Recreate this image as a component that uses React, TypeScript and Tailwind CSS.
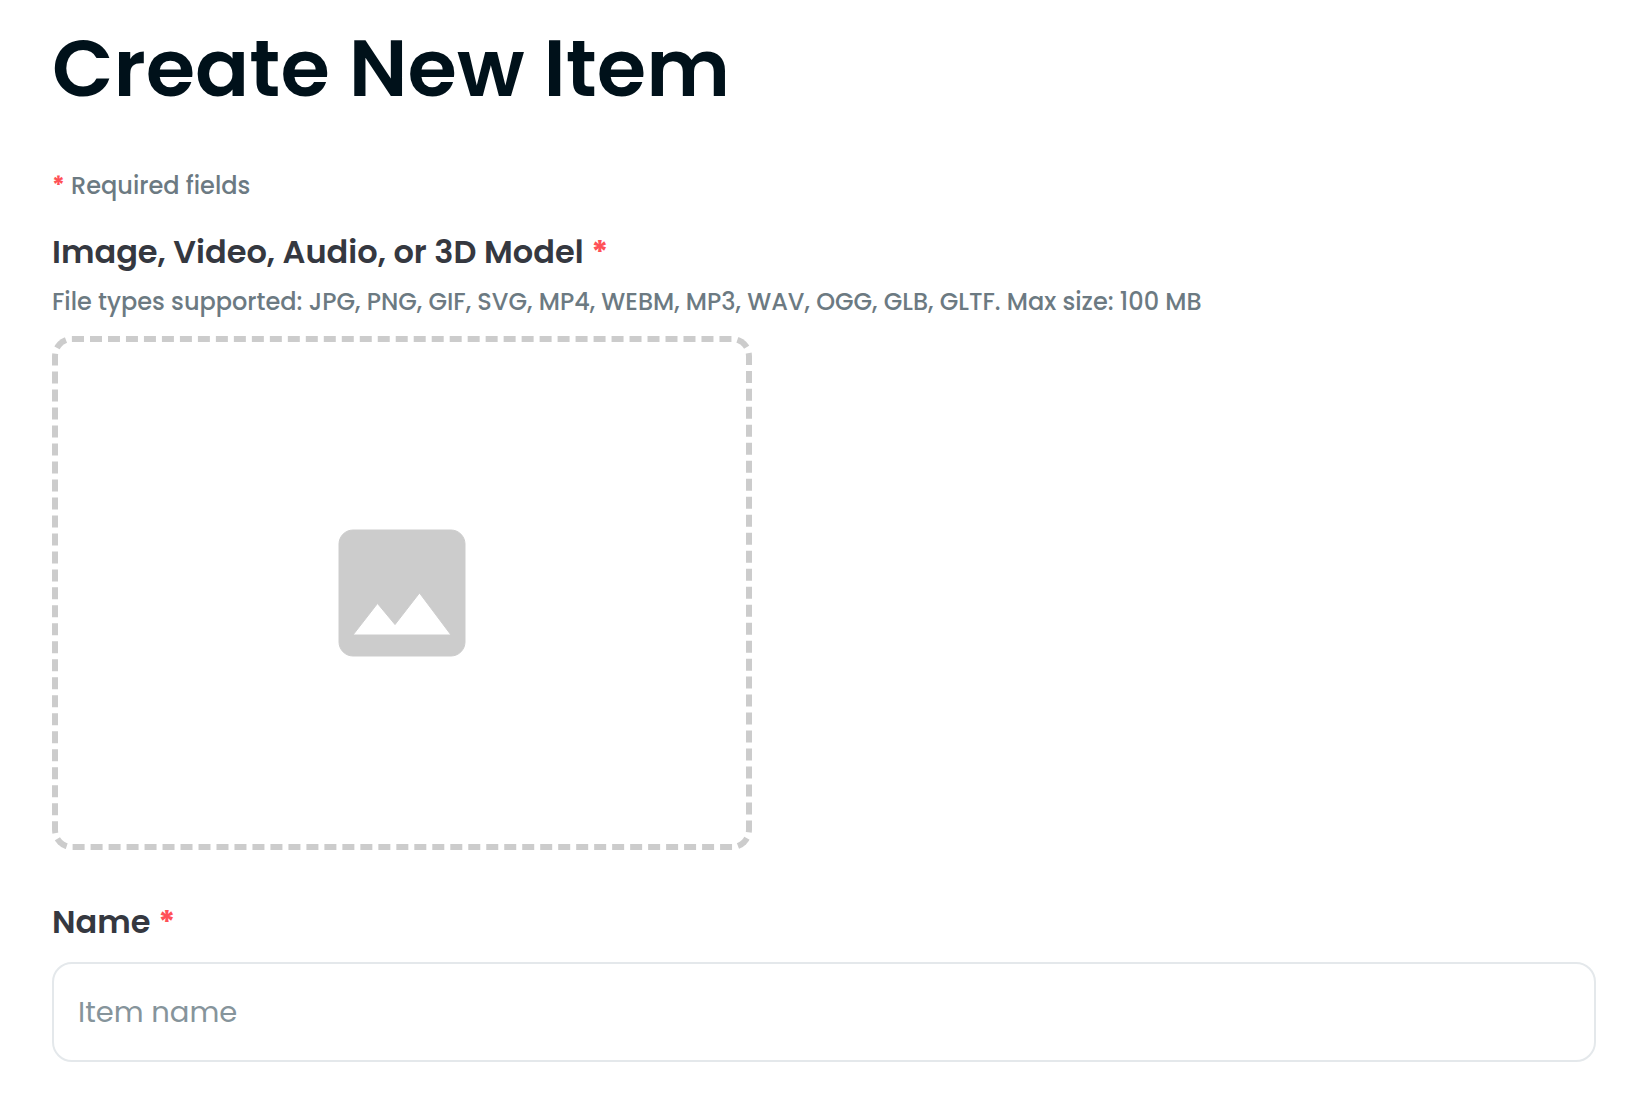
import * as React from "react"

function Required() {
  return <span className="font-bold text-[#ff5157]">*</span>
}

export default function App() {
  const [name, setName] = React.useState("")

  return (
    <main className="min-h-screen bg-white pl-[52px] pr-[46px] pt-5 font-['Poppins','Inter',sans-serif] antialiased">
      <h1 className="text-[80px] leading-[96px] font-semibold text-[#00111a]">Create New Item</h1>

      <form>
        <p className="mt-[52px] text-2xl leading-9 font-medium text-[#6c7a82]">
          <Required /> Required fields
        </p>

        {/* Media upload */}
        <div className="mt-6">
          <label htmlFor="media" className="block text-[32px] leading-[48px] font-semibold text-[#353840]">
            Image, Video, Audio, or 3D Model <Required />
          </label>
          <p className="mt-2 text-2xl leading-9 font-medium text-[#6c7a82]">
            File types supported: JPG, PNG, GIF, SVG, MP4, WEBM, MP3, WAV, OGG, GLB, GLTF. Max size: 100 MB
          </p>
          <label
            htmlFor="media"
            className="mt-4 flex h-[514px] w-[700px] max-w-full cursor-pointer items-center justify-center rounded-[20px] border-6 border-dashed border-[#cccccc]"
          >
            <svg
              viewBox="0 0 24 24"
              className="size-42 fill-[#cccccc] stroke-[#cccccc]"
              strokeWidth="0.14"
              aria-hidden="true"
            >
              <path d="M21 19V5c0-1.1-.9-2-2-2H5c-1.1 0-2 .9-2 2v14c0 1.1.9 2 2 2h14c1.1 0 2-.9 2-2zM8.5 13.5l2.5 3.01L14.5 12l4.5 6H5l3.500-4.500z" />
            </svg>
          </label>
          <input id="media" type="file" aria-label="Media file" className="sr-only" />
        </div>

        {/* Item name */}
        <div className="mt-12">
          <label htmlFor="name" className="block text-[32px] leading-[48px] font-semibold text-[#353840]">
            Name <Required />
          </label>
          <input
            id="name"
            type="text"
            placeholder="Item name"
            value={name}
            onChange={(e) => setName(e.target.value)}
            className="mt-4 h-[100px] w-full rounded-[20px] border-2 border-[#e4e8eb] px-6 text-[29px] text-[#353840] outline-none placeholder:text-[#86949b]"
          />
        </div>
      </form>
    </main>
  )
}
